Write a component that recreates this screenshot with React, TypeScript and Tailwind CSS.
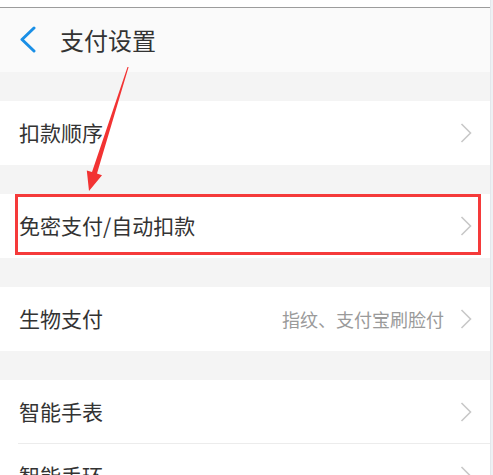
import React from "react";

const font = { fontFamily: '"Noto Sans CJK SC", "Noto Sans", sans-serif' };

function Chevron() {
  return (
    <svg width="12" height="20" viewBox="0 0 12 20" className="shrink-0">
      <polyline points="1.5,1 10.5,10 1.5,19" fill="none" stroke="#c8c8c8" strokeWidth="1.6" />
    </svg>
  );
}

function Row({ label, right, divider }: { label: string; right?: string; divider?: boolean }) {
  return (
    <div className="relative flex h-[64px] shrink-0 items-center bg-white pl-[19px] pr-[18px]">
      <span className="flex-1 text-[21px] text-[#333333]">{label}</span>
      {right && <span className="mr-[16px] text-[18px] text-[#9a9a9a]">{right}</span>}
      <Chevron />
      {divider && <div className="absolute bottom-0 left-[18px] right-0 h-px bg-[#ececec]" />}
    </div>
  );
}

function Band() {
  return <div className="h-[29px] shrink-0 bg-[#f4f4f4]" />;
}

export default function App() {
  return (
    <div className="relative flex h-[475px] w-[493px] overflow-hidden bg-white" style={font}>
      <div className="flex w-[490px] shrink-0 flex-col">
        <div className="h-[7px] shrink-0 bg-white" />
        <div className="h-px shrink-0 bg-[#9c9c9c]" />
        <div className="flex h-[64px] shrink-0 items-center bg-[#fafafa] pl-[19px]">
          <svg width="18" height="28" viewBox="0 0 18 28" className="shrink-0">
            <polyline points="15,2 3,13.5 15,25" fill="none" stroke="#1a8fe6" strokeWidth="3" strokeLinecap="round" strokeLinejoin="round" />
          </svg>
          <span className="ml-[23px] text-[24px] text-[#333333]">支付设置</span>
        </div>
        <Band />
        <Row label="扣款顺序" />
        <Band />
        <div className="relative shrink-0">
          <Row label="免密支付/自动扣款" />
          <div className="absolute left-[15px] top-0 h-[61px] w-[466px] border-[3px] border-[#f53a3a]" />
        </div>
        <Band />
        <Row label="生物支付" right="指纹、支付宝刷脸付" />
        <Band />
        <Row label="智能手表" divider />
        <Row label="智能手环" />
      </div>
      <div className="w-[3px] shrink-0 border-l border-[#e3e7ec] bg-[#eef1f4]" />
      <svg className="pointer-events-none absolute left-0 top-0" width="493" height="475">
        <polygon
          points="127.5,67 128.6,67 97,173.5 102,175.2 89,191 86.8,170.4 92,172"
          fill="#f23333"
        />
      </svg>
    </div>
  );
}
